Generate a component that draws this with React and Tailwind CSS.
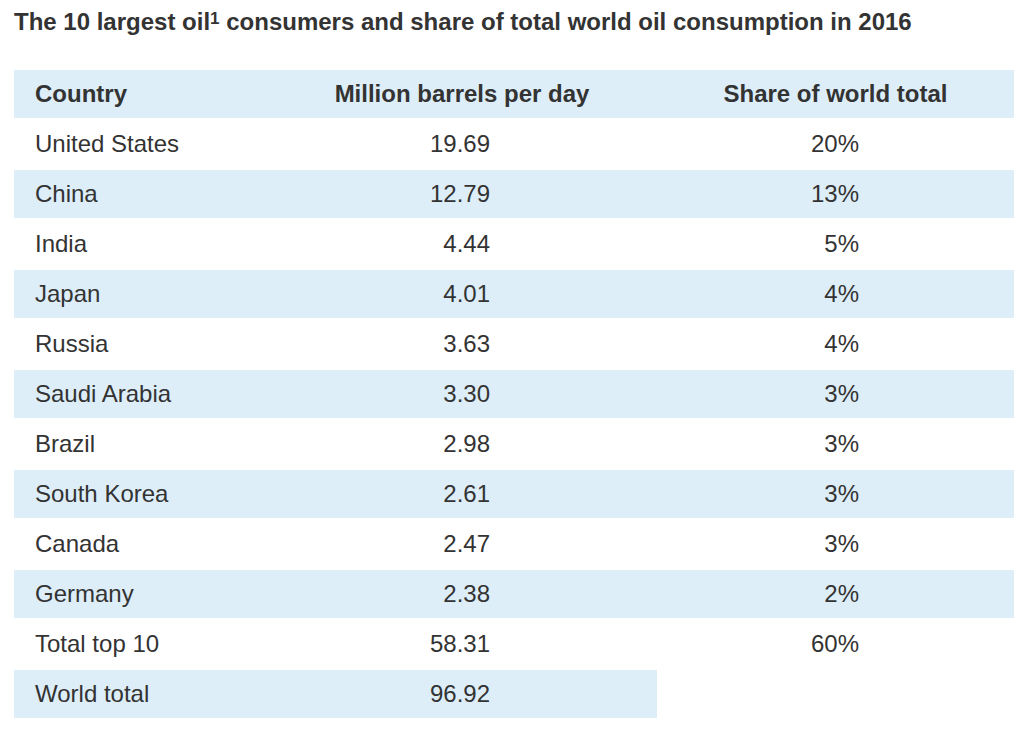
import React from "react";

// Top consumers, 2016
const ROWS = [
  { country: "United States", mbd: "19.69", share: "20%" },
  { country: "China", mbd: "12.79", share: "13%" },
  { country: "India", mbd: "4.44", share: "5%" },
  { country: "Japan", mbd: "4.01", share: "4%" },
  { country: "Russia", mbd: "3.63", share: "4%" },
  { country: "Saudi Arabia", mbd: "3.30", share: "3%" },
  { country: "Brazil", mbd: "2.98", share: "3%" },
  { country: "South Korea", mbd: "2.61", share: "3%" },
  { country: "Canada", mbd: "2.47", share: "3%" },
  { country: "Germany", mbd: "2.38", share: "2%" },
  { country: "Total top 10", mbd: "58.31", share: "60%" },
];

export default function App() {
  return (
    <div
      className="min-h-screen bg-white px-[14px] pt-[8px] text-[#333]"
      style={{ fontFamily: '"Liberation Sans", Arial, sans-serif' }}
    >
      <h1 className="text-[24px] font-bold leading-[28px] whitespace-nowrap">
        The 10 largest oil
        <span className="relative -top-[6px] text-[17px] leading-none">1</span> consumers and share of total
        world oil consumption in 2016
      </h1>

      <table className="mt-[32px] w-[1000px] border-separate border-spacing-x-0 border-spacing-y-[2px] text-[24px]">
        <colgroup>
          <col className="w-[247px]" />
          <col className="w-[396px]" />
          <col />
        </colgroup>
        <thead>
          <tr className="bg-[#ddeef9]">
            <th className="h-[48px] pl-[21px] text-left font-bold">Country</th>
            <th className="h-[48px] text-center font-bold pl-[6px]">Million barrels per day</th>
            <th className="h-[48px] text-center font-bold">Share of world total</th>
          </tr>
        </thead>
        <tbody>
          {ROWS.map((r, i) => (
            <tr key={r.country} className={i % 2 === 1 ? "bg-[#ddeef9]" : ""}>
              <td className="h-[48px] pl-[21px]">{r.country}</td>
              <td className="h-[48px] text-right pr-[167px]">{r.mbd}</td>
              <td className="h-[48px] text-right pr-[155px]">{r.share}</td>
            </tr>
          ))}
          <tr>
            <td className="h-[48px] pl-[21px] bg-[#ddeef9]">World total</td>
            <td className="h-[48px] text-right pr-[167px] bg-[#ddeef9]">96.92</td>
            <td className="h-[48px]" />
          </tr>
        </tbody>
      </table>
    </div>
  );
}
